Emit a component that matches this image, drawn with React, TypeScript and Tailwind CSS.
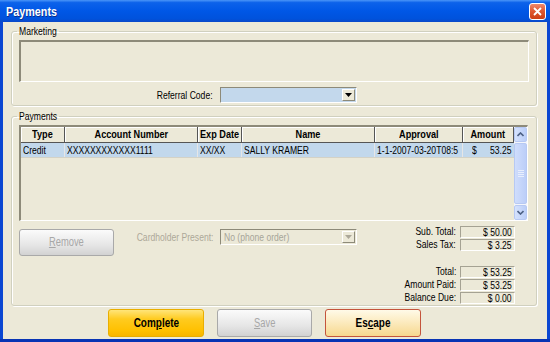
import React from "react";

// Tahoma-like narrow text: Liberation Sans squeezed horizontally
function T({
  children,
  at = "l",
  bold,
  className,
}: {
  children: React.ReactNode;
  at?: "l" | "c" | "r";
  bold?: boolean;
  className?: string;
}) {
  const o = at === "r" ? "origin-right" : at === "c" ? "origin-center" : "origin-left";
  const s = bold ? "scale-x-[0.83]" : "scale-x-[0.78]";
  return (
    <span className={"inline-block whitespace-nowrap " + s + " " + o + " " + (className ?? "")}>
      {children}
    </span>
  );
}

function Sunken({ className }: { className?: string }) {
  return (
    <div
      className={
        "border-t-2 border-l-2 border-b border-r border-t-[#8D8A79] border-l-[#8D8A79] border-b-white border-r-white " +
        (className ?? "")
      }
    />
  );
}

function Combo({ value, disabled }: { value?: string; disabled?: boolean }) {
  return (
    <div
      className={
        "flex h-[16px] w-[137px] items-stretch border border-t-[#8D8A79] border-l-[#8D8A79] border-b-white border-r-white " +
        (disabled ? "bg-[#ECE9D8]" : "bg-[#C3D8EC]")
      }
    >
      <div className="flex-1 overflow-hidden pl-[3px] leading-[14px] text-[#A7A598]">
        {value && <T>{value}</T>}
      </div>
      <div className="m-[1px] flex w-[13px] items-center justify-center border border-t-white border-l-white border-b-[#8D8A79] border-r-[#8D8A79] bg-[#ECE9D8]">
        <svg width="7" height="4" viewBox="0 0 7 4">
          <path d="M0 0h7L3.5 4z" fill={disabled ? "#ACA899" : "#000"} />
        </svg>
      </div>
    </div>
  );
}

function TotalRow({ label, value, className }: { label: string; value: string; className?: string }) {
  return (
    <div className={"flex h-[13px] items-center " + (className ?? "")}>
      <span className="w-[99px] text-right">
        <T at="r">{label}</T>
      </span>
      <div className="ml-[4px] h-[12px] w-[55px] border border-t-[#A5A293] border-l-[#A5A293] border-b-white border-r-white pr-[2px] text-right leading-[10px]">
        <T at="r">{value}</T>
      </div>
    </div>
  );
}

const cols = [
  { title: "Type", w: "w-[44px]", v: "Credit" },
  { title: "Account Number", w: "w-[133px]", v: "XXXXXXXXXXXX1111" },
  { title: "Exp Date", w: "w-[44px]", v: "XX/XX" },
  { title: "Name", w: "w-[133px]", v: "SALLY KRAMER" },
  { title: "Approval", w: "w-[88px]", v: "1-1-2007-03-20T08:5" },
];

function ScrollArrow({ up }: { up?: boolean }) {
  return (
    <div className="flex h-[15px] items-center justify-center rounded-[2px] border border-[#B7C9F3] bg-[linear-gradient(to_right,#D5E2FD,#BBCEF8)]">
      <svg width="7" height="5" viewBox="0 0 7 5">
        <path
          d={up ? "M0.5 4L3.5 1L6.5 4" : "M0.5 1L3.5 4L6.5 1"}
          stroke="#4D6185"
          strokeWidth="1.6"
          fill="none"
        />
      </svg>
    </div>
  );
}

function PaymentsTable() {
  return (
    <div className="mt-[2px] flex h-[96px] w-[509px] border-t-2 border-l-2 border-b border-r border-t-[#8D8A79] border-l-[#8D8A79] border-b-white border-r-white">
      <div className="flex-1">
        <div className="flex h-[16px] font-bold">
          {cols.map((c) => (
            <div
              key={c.title}
              className={c.w + " flex items-center justify-center border-r border-b border-[#555] bg-[#ECE9D8] shadow-[inset_1px_1px_0_#fff]"}
            >
              <T at="c" bold>
                {c.title}
              </T>
            </div>
          ))}
          <div className="flex w-[51px] items-center justify-center border-r border-b border-[#555] bg-[#ECE9D8] shadow-[inset_1px_1px_0_#fff]">
            <T at="c" bold>
              Amount
            </T>
          </div>
        </div>
        <div className="flex h-[15px] border-b border-[#D4D2C6] bg-[#C2D8EC] leading-[14px]">
          {cols.map((c) => (
            <div key={c.title} className={c.w + " overflow-hidden border-r border-[#E6E6E6] pl-[2px]"}>
              <T>{c.v}</T>
            </div>
          ))}
          <div className="flex w-[51px] justify-between pl-[9px] pr-[2px]">
            <T>$</T>
            <T at="r">53.25</T>
          </div>
        </div>
      </div>
      <div className="flex w-[14px] flex-col gap-[1px] bg-[#F3F5FB]">
        <ScrollArrow up />
        <div className="flex flex-1 items-center justify-center rounded-[2px] border border-[#B7C9F3] bg-[linear-gradient(to_right,#CFDDFC,#BCCEF8)]">
          <div className="flex flex-col gap-[1px]">
            <div className="h-[1px] w-[6px] bg-[#E8EEFD]" />
            <div className="h-[1px] w-[6px] bg-[#E8EEFD]" />
            <div className="h-[1px] w-[6px] bg-[#E8EEFD]" />
            <div className="h-[1px] w-[6px] bg-[#E8EEFD]" />
          </div>
        </div>
        <ScrollArrow />
      </div>
    </div>
  );
}

function GreyButton({ children, className }: { children: React.ReactNode; className?: string }) {
  return (
    <div
      className={
        "flex h-[27px] items-center justify-center rounded-[3px] border border-[#A9A9A9] bg-[linear-gradient(to_bottom,#FBFBFB,#E6E6E6_60%,#D2D2D2)] text-[12px] text-[#A7A7A7] " +
        (className ?? "")
      }
    >
      {children}
    </div>
  );
}

export default function App() {
  return (
    <div className="flex h-[342px] w-[550px] flex-col overflow-hidden bg-[#0B47D2] font-['Liberation_Sans',Arial,sans-serif] text-[11px] leading-[13px] text-black">
      <div className="flex h-[22px] items-center justify-between bg-[linear-gradient(to_bottom,#4A95F8_0%,#0C62EA_12%,#0057E6_50%,#0052DC_85%,#0A48C8_100%)] pl-[6px] pr-[4px]">
        <T bold className="text-[13px] font-bold text-white [text-shadow:1px_1px_0_#0A2E8C]">
          Payments
        </T>
        <div className="flex h-[17px] w-[17px] items-center justify-center rounded-[3px] border border-white bg-[linear-gradient(to_bottom,#EE8A6E,#E05A33_45%,#CC3E14)]">
          <svg width="9" height="9" viewBox="0 0 9 9">
            <path d="M1 1L8 8M8 1L1 8" stroke="#fff" strokeWidth="1.8" />
          </svg>
        </div>
      </div>

      <div className="mx-[3px] flex flex-1 flex-col bg-[#ECE9D8] pl-[8px] pr-[10px] pt-[3px]">
        <fieldset className="rounded-[3px] border border-[#D0D0BF] px-[7px] pb-[2px] shadow-[inset_1px_1px_0_#fff,1px_1px_0_#fff]">
          <legend className="-ml-[2px] w-[42px] px-[2px]">
            <T>Marketing</T>
          </legend>
          <Sunken className="mt-[2px] h-[42px]" />
          <div className="mt-[5px] flex h-[16px] items-center">
            <span className="w-[194px] text-right">
              <T at="r">Referral Code:</T>
            </span>
            <div className="ml-[7px]">
              <Combo />
            </div>
          </div>
        </fieldset>

        <fieldset className="mt-[4px] rounded-[3px] border border-[#D0D0BF] px-[7px] pb-[1px] shadow-[inset_1px_1px_0_#fff,1px_1px_0_#fff]">
          <legend className="-ml-[2px] w-[42px] px-[2px]">
            <T>Payments</T>
          </legend>
          <PaymentsTable />
          <div className="mt-[4px] flex">
            <div className="mt-[4px] flex items-start">
              <GreyButton className="w-[95px]">
                <T at="c">
                  <u>R</u>emove
                </T>
              </GreyButton>
              <span className="mt-[2px] w-[99px] text-right text-[#ACA899]">
                <T at="r">Cardholder Present:</T>
              </span>
              <div className="ml-[7px]">
                <Combo value="No (phone order)" disabled />
              </div>
            </div>
            <div className="flex flex-col">
              <TotalRow label="Sub. Total:" value="$ 50.00" />
              <TotalRow label="Sales Tax:" value="$ 3.25" />
              <TotalRow label="Total:" value="$ 53.25" className="mt-[14px]" />
              <TotalRow label="Amount Paid:" value="$ 53.25" />
              <TotalRow label="Balance Due:" value="$ 0.00" />
            </div>
          </div>
        </fieldset>

        <div className="ml-[97px] mt-[3px] flex gap-[13px] text-[12px] font-bold">
          <div className="flex h-[28px] w-[96px] items-center justify-center rounded-[3px] border border-[#E9AE00] bg-[linear-gradient(to_bottom,#FFE57A,#FFCB1F_35%,#FFC000_80%,#F7B500)]">
            <T at="c" bold>
              Com<u>p</u>lete
            </T>
          </div>
          <GreyButton className="h-[28px] w-[95px] font-normal">
            <T at="c">
              <u>S</u>ave
            </T>
          </GreyButton>
          <div className="flex h-[28px] w-[96px] items-center justify-center rounded-[3px] border border-[#C4543C] bg-[linear-gradient(to_bottom,#FFFAE8,#FCEBC0_45%,#F6D88E)]">
            <T at="c" bold>
              Es<u>c</u>ape
            </T>
          </div>
        </div>
      </div>
      <div className="h-[3px] bg-[#0834B4]" />
    </div>
  );
}
